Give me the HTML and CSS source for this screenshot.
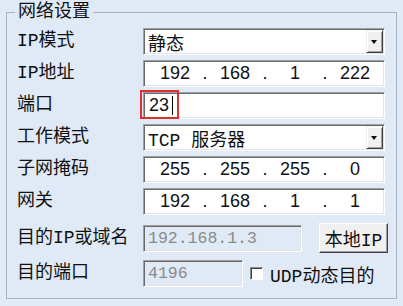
FILE: index.html
```html
<!doctype html>
<html lang="zh-CN">
  <head>
    <meta charset="UTF-8" />
    <meta name="viewport" content="width=device-width, initial-scale=1.0" />
    <title>网络设置</title>
    <link rel="stylesheet" href="styles.css">
  </head>
  <body>
    <fieldset class="group">
      <legend>网络设置</legend>

      <div class="row">
        <span class="label">IP模式</span>
        <div class="field select">
          <span class="value">静态</span>
          <span class="drop"></span>
        </div>
      </div>

      <div class="row">
        <span class="label">IP地址</span>
        <div class="field ip">
          <span>192</span><i>.</i><span>168</span><i>.</i><span>1</span><i>.</i><span>222</span>
        </div>
      </div>

      <div class="row">
        <span class="label">端口</span>
        <div class="field port">
          <span class="num">23</span><span class="caret"></span>
          <span class="mark"></span>
        </div>
      </div>

      <div class="row">
        <span class="label">工作模式</span>
        <div class="field select">
          <span class="value">TCP 服务器</span>
          <span class="drop"></span>
        </div>
      </div>

      <div class="row">
        <span class="label">子网掩码</span>
        <div class="field ip">
          <span>255</span><i>.</i><span>255</span><i>.</i><span>255</span><i>.</i><span>0</span>
        </div>
      </div>

      <div class="row">
        <span class="label">网关</span>
        <div class="field ip">
          <span>192</span><i>.</i><span>168</span><i>.</i><span>1</span><i>.</i><span>1</span>
        </div>
      </div>

      <div class="row row-dest">
        <span class="label">目的IP或域名</span>
        <div class="field disabled dest">192.168.1.3</div>
        <button class="btn" type="button">本地IP</button>
      </div>

      <div class="row row-port">
        <span class="label">目的端口</span>
        <div class="field disabled short">4196</div>
        <span class="check"></span>
        <span class="check-text">UDP动态目的</span>
      </div>
    </fieldset>
  </body>
</html>
```

FILE: styles.css
```css
/* Panel */
body {
  margin: 0;
  width: 403px;
  height: 306px;
  overflow: hidden;
  background-color: #dfeaf6;
  color: #111;
  font-family: "Liberation Mono", "Noto Sans CJK SC", monospace;
  font-size: 18px;
}

.group {
  box-sizing: border-box;
  width: 391px;
  height: 298px;
  margin: 1px 0 0 6px;
  padding: 5px 0 0 10px;
  border: 1px solid #a7b2bf;
  min-inline-size: 0;
}

.group legend {
  margin-left: -2px;
  padding: 0 3px;
  line-height: 22px;
}

/* Rows */
.row {
  display: flex;
  align-items: center;
  height: 27px;
  margin-top: 5px;
}

.row:first-of-type {
  margin-top: 0;
}

.row-dest {
  height: 30px;
  margin-top: 8px;
}

.row-port {
  margin-top: 7px;
}

.label {
  width: 126px;
  flex: none;
  line-height: 27px;
  white-space: nowrap;
}

/* Sunken edit fields */
.field {
  position: relative;
  box-sizing: border-box;
  display: flex;
  align-items: center;
  width: 242px;
  height: 27px;
  padding: 0 1px 0 4px;
  background: #fff;
  border: 1px solid;
  border-color: #a0a0a0 #fff #fff #a0a0a0;
  box-shadow: inset 1px 1px 0 #696969, inset -1px -1px 0 #e3e3e3;
  white-space: nowrap;
}

.select .drop {
  position: relative;
  box-sizing: border-box;
  width: 17px;
  height: 23px;
  margin-left: auto;
  background: #f0f0f0;
  border: 1px solid;
  border-color: #f0f0f0 #404040 #404040 #f0f0f0;
  box-shadow: inset 1px 1px 0 #fff, inset -1px -1px 0 #a0a0a0;
}

.select .drop::after {
  content: "";
  position: absolute;
  left: 4px;
  top: 9px;
  border-left: 3.5px solid transparent;
  border-right: 3.5px solid transparent;
  border-top: 4px solid #000;
}

.ip {
  padding-left: 6px;
  font-family: "Liberation Sans", sans-serif;
}

.ip span {
  width: 50px;
  text-align: center;
}

.ip i {
  width: 10px;
  font-style: normal;
  text-align: center;
}

.port .num {
  font-family: "Liberation Sans", sans-serif;
  margin-left: 1px;
}

.port .caret {
  width: 1px;
  height: 19px;
  margin-left: 3px;
  background: #000;
}

/* red highlight drawn over the field */
.port .mark {
  position: absolute;
  left: -4px;
  top: -3px;
  box-sizing: border-box;
  width: 39px;
  height: 29px;
  border: 2px solid #e0302c;
}

.disabled {
  background: #dfeaf6;
  color: #8a8a8a;
  font-size: 16.5px;
}

.dest {
  width: 159px;
}

.short {
  width: 100px;
}

.btn {
  box-sizing: border-box;
  width: 69px;
  height: 30px;
  margin-left: 17px;
  padding: 0;
  background: #f0f0f0;
  border: 1px solid;
  border-color: #fff #404040 #404040 #fff;
  box-shadow: inset -1px -1px 0 #a0a0a0;
  color: #111;
  font: inherit;
}

.check {
  box-sizing: border-box;
  width: 13px;
  height: 13px;
  margin-left: 7px;
  background: #fff;
  border: 1px solid;
  border-color: #8a8a8a #fff #fff #8a8a8a;
  box-shadow: inset 1px 1px 0 #404040;
}

.check-text {
  margin-left: 7px;
  white-space: nowrap;
}
```
